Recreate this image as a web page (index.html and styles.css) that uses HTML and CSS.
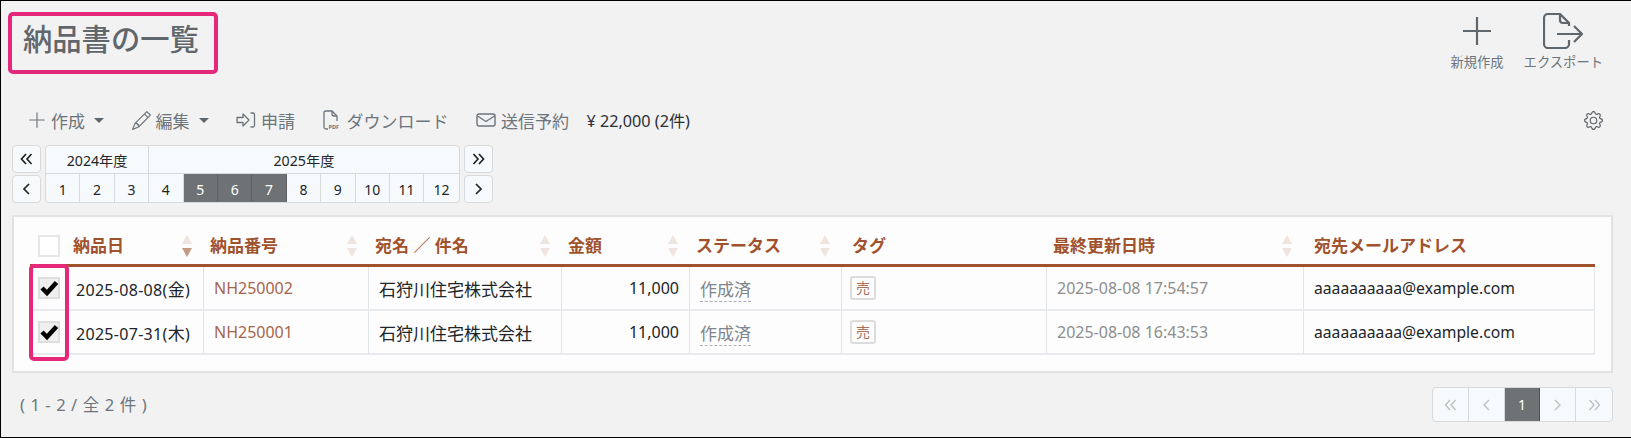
FILE: index.html
```html
<!DOCTYPE html>
<html lang="ja">

<head>
    <meta charset="UTF-8">
    <title>納品書の一覧</title>
    <link rel="stylesheet" href="styles.css">
</head>

<body>
    <div class="page">
        <header class="top">
            <h1 class="title">納品書の一覧</h1>
            <div class="top-actions">
                <div class="top-action new">
                    <svg class="top-icon" width="30" height="30" viewBox="0 0 30 30"><path d="M15 1v28M1 15h28" fill="none" stroke="currentColor" stroke-width="2.2"/></svg>
                    <span>新規作成</span>
                </div>
                <div class="top-action export">
                    <svg class="top-icon" width="40" height="36" viewBox="0 0 40 36"><path d="M26 13V10L17 1H5a4 4 0 0 0-4 4v26a4 4 0 0 0 4 4h17a4 4 0 0 0 4-4v-4M17 1v6a3 3 0 0 0 3 3h6M14 21h25M31 13l8 8-8 8" fill="none" stroke="currentColor" stroke-width="2.2"/></svg>
                    <span>エクスポート</span>
                </div>
            </div>
        </header>

        <div class="toolbar">
            <span class="tool"><svg width="18" height="18" viewBox="0 0 16 16" fill="currentColor"><path d="M8 1a.5.5 0 0 1 .5.5v6h6a.5.5 0 0 1 0 1h-6v6a.5.5 0 0 1-1 0v-6h-6a.5.5 0 0 1 0-1h6v-6A.5.5 0 0 1 8 1"/></svg>作成<i class="caret"></i></span>
            <span class="tool"><svg width="19" height="19" viewBox="0 0 16 16" fill="currentColor"><path d="M12.146.146a.5.5 0 0 1 .708 0l3 3a.5.5 0 0 1 0 .708l-10 10a.5.5 0 0 1-.168.11l-5 2a.5.5 0 0 1-.65-.65l2-5a.5.5 0 0 1 .11-.168zM11.207 2.5 13.5 4.793 14.793 3.5 12.5 1.207zm1.586 3L10.5 3.207 4 9.707V10h.5a.5.5 0 0 1 .5.5v.5h.5a.5.5 0 0 1 .5.5v.5h.293zm-9.761 5.175-.106.106-1.528 3.821 3.821-1.528.106-.106A.5.5 0 0 1 5 12.5V12h-.5a.5.5 0 0 1-.5-.5V11h-.5a.5.5 0 0 1-.468-.325"/></svg>編集<i class="caret"></i></span>
            <span class="tool"><svg width="20" height="18" viewBox="0 0 20 18" fill="none" stroke="currentColor" stroke-width="1.3" stroke-linejoin="round"><path d="M1 6.500h6V3l6 6-6 6v-3.500H1zM14.500 2H17a1.500 1.500 0 0 1 1.500 1.500v11A1.500 1.500 0 0 1 17 16h-2.500"/></svg>申請</span>
            <span class="tool"><svg width="19" height="20" viewBox="0 0 19 20" fill="none" stroke="currentColor" stroke-width="1.3"><path d="M5 19H3a2 2 0 0 1-2-2V3a2 2 0 0 1 2-2h6l5 5v5M9 1v3a2 2 0 0 0 2 2h3"/><text class="pdf-mark" x="5.500" y="19">PDF</text></svg>ダウンロード</span>
            <span class="tool"><svg width="20" height="14" viewBox="0 0 20 14" fill="none" stroke="currentColor" stroke-width="1.4" stroke-linejoin="round"><rect x="1" y="1" width="18" height="12" rx="2"/><path d="M1.500 3l8.500 5.500L18.500 3"/></svg>送信予約</span>
            <span class="total">¥ 22,000 (2件)</span>
            <svg class="gear" width="19" height="19" viewBox="0 0 16 16" fill="currentColor"><path d="M8 4.754a3.246 3.246 0 1 0 0 6.492 3.246 3.246 0 0 0 0-6.492M5.754 8a2.246 2.246 0 1 1 4.492 0 2.246 2.246 0 0 1-4.492 0"/><path d="M9.796 1.343c-.527-1.79-3.065-1.79-3.592 0l-.094.319a.873.873 0 0 1-1.255.52l-.292-.16c-1.64-.892-3.433.902-2.54 2.541l.159.292a.873.873 0 0 1-.52 1.255l-.319.094c-1.79.527-1.79 3.065 0 3.592l.319.094a.873.873 0 0 1 .52 1.255l-.16.292c-.892 1.64.901 3.434 2.541 2.54l.292-.159a.873.873 0 0 1 1.255.52l.094.319c.527 1.79 3.065 1.79 3.592 0l.094-.319a.873.873 0 0 1 1.255-.52l.292.16c1.64.893 3.434-.902 2.54-2.541l-.159-.292a.873.873 0 0 1 .52-1.255l.319-.094c1.79-.527 1.79-3.065 0-3.592l-.319-.094a.873.873 0 0 1-.52-1.255l.16-.292c.893-1.64-.902-3.433-2.541-2.54l-.292.159a.873.873 0 0 1-1.255-.52zm-2.633.283c.246-.835 1.428-.835 1.674 0l.094.319a1.873 1.873 0 0 0 2.693 1.115l.291-.16c.764-.415 1.6.42 1.184 1.185l-.159.292a1.873 1.873 0 0 0 1.116 2.692l.318.094c.835.246.835 1.428 0 1.674l-.319.094a1.873 1.873 0 0 0-1.115 2.693l.16.291c.415.764-.42 1.6-1.185 1.184l-.291-.159a1.873 1.873 0 0 0-2.693 1.116l-.094.318c-.246.835-1.428.835-1.674 0l-.094-.319a1.873 1.873 0 0 0-2.692-1.115l-.292.16c-.764.415-1.6-.42-1.184-1.185l.159-.291A1.873 1.873 0 0 0 1.945 8.93l-.319-.094c-.835-.246-.835-1.428 0-1.674l.319-.094A1.873 1.873 0 0 0 3.06 4.377l-.16-.292c-.415-.764.42-1.6 1.185-1.184l.292.159a1.873 1.873 0 0 0 2.692-1.115z"/></svg>
        </div>

        <div class="calendar">
            <div class="cal-nav">
                <span class="cal-btn"><svg width="13" height="12" viewBox="0 0 13 12"><path d="M6 1L1.500 6 6 11M11.500 1L7 6l4.500 5"/></svg></span>
                <span class="cal-btn"><svg width="13" height="12" viewBox="0 0 13 12"><path d="M9 1L4 6l5 5"/></svg></span>
            </div>
            <div class="cal-grid">
                <div class="cal-year y2024">2024年度</div>
                <div class="cal-year y2025">2025年度</div>
                <div class="cal-month">1</div>
                <div class="cal-month">2</div>
                <div class="cal-month">3</div>
                <div class="cal-month">4</div>
                <div class="cal-month active">5</div>
                <div class="cal-month active">6</div>
                <div class="cal-month active">7</div>
                <div class="cal-month">8</div>
                <div class="cal-month">9</div>
                <div class="cal-month">10</div>
                <div class="cal-month">11</div>
                <div class="cal-month">12</div>
            </div>
            <div class="cal-nav">
                <span class="cal-btn"><svg width="13" height="12" viewBox="0 0 13 12"><path d="M1.500 1L6 6l-4.500 5M7 1l4.500 5L7 11"/></svg></span>
                <span class="cal-btn"><svg width="13" height="12" viewBox="0 0 13 12"><path d="M4 1l5 5-5 5"/></svg></span>
            </div>
        </div>

        <section class="panel">
            <table class="list">
                <colgroup>
                    <col class="c-check">
                    <col class="c-date">
                    <col class="c-no">
                    <col class="c-name">
                    <col class="c-amount">
                    <col class="c-status">
                    <col class="c-tag">
                    <col class="c-updated">
                    <col class="c-mail">
                </colgroup>
                <thead>
                    <tr>
                        <th><span class="check"></span></th>
                        <th class="th-date"><div class="th-in">納品日<span class="sort desc"></span></div></th>
                        <th><div class="th-in">納品番号<span class="sort"></span></div></th>
                        <th><div class="th-in">宛名 ／ 件名<span class="sort"></span></div></th>
                        <th><div class="th-in">金額<span class="sort"></span></div></th>
                        <th><div class="th-in">ステータス<span class="sort"></span></div></th>
                        <th class="th-tag"><div class="th-in">タグ</div></th>
                        <th><div class="th-in">最終更新日時<span class="sort"></span></div></th>
                        <th class="th-mail"><div class="th-in">宛先メールアドレス</div></th>
                    </tr>
                </thead>
                <tbody>
                    <tr>
                        <td class="td-check"><span class="check on"><svg width="22" height="22" viewBox="0 0 22 22"><path d="M4 11l5 5L18.500 5.500" fill="none" stroke="#000" stroke-width="4.500"/></svg></span></td>
                        <td class="td-date">2025-08-08(<span class="ja">金</span>)</td>
                        <td><a class="link">NH250002</a></td>
                        <td class="ja">石狩川住宅株式会社</td>
                        <td class="num">11,000</td>
                        <td class="ja"><span class="status">作成済</span></td>
                        <td class="td-tag"><span class="tag">売</span></td>
                        <td class="updated">2025-08-08 17:54:57</td>
                        <td class="td-mail">aaaaaaaaaa@example.com</td>
                    </tr>
                    <tr>
                        <td class="td-check"><span class="check on"><svg width="22" height="22" viewBox="0 0 22 22"><path d="M4 11l5 5L18.500 5.500" fill="none" stroke="#000" stroke-width="4.500"/></svg></span></td>
                        <td class="td-date">2025-07-31(<span class="ja">木</span>)</td>
                        <td><a class="link">NH250001</a></td>
                        <td class="ja">石狩川住宅株式会社</td>
                        <td class="num">11,000</td>
                        <td class="ja"><span class="status">作成済</span></td>
                        <td class="td-tag"><span class="tag">売</span></td>
                        <td class="updated">2025-08-08 16:43:53</td>
                        <td class="td-mail">aaaaaaaaaa@example.com</td>
                    </tr>
                </tbody>
            </table>
        </section>

        <footer class="foot">
            <span class="count">( 1 - 2 / 全 2 件 )</span>
            <div class="pager">
                <span class="page-item"><svg width="13" height="12" viewBox="0 0 13 12"><path d="M6 1L1.500 6 6 11M11.500 1L7 6l4.500 5"/></svg></span>
                <span class="page-item"><svg width="13" height="12" viewBox="0 0 13 12"><path d="M9 1L4 6l5 5"/></svg></span>
                <span class="page-item active">1</span>
                <span class="page-item"><svg width="13" height="12" viewBox="0 0 13 12"><path d="M4 1l5 5-5 5"/></svg></span>
                <span class="page-item"><svg width="13" height="12" viewBox="0 0 13 12"><path d="M1.500 1L6 6l-4.500 5M7 1l4.500 5L7 11"/></svg></span>
            </div>
        </footer>

        <!-- annotations drawn over the screen -->
        <div class="mark mark-title"></div>
        <div class="mark mark-checks"></div>
    </div>
</body>

</html>
```

FILE: styles.css
```css
* {
    box-sizing: border-box;
}

body {
    margin: 0;
    font-family: "Noto Sans", "Noto Sans CJK JP", sans-serif;
    font-size: 16px;
    color: #2b3035;
    background-color: #f2f2f2;
}

.page {
    position: relative;
    height: 438px;
    overflow: hidden;
    border: 1px solid #000;
    border-right: none;
    background-color: #f2f2f2;
}

/* header */
.top {
    display: flex;
    justify-content: space-between;
    height: 105px;
}

.title {
    margin: 20px 0 0 22px;
    font-size: 29.3px;
    line-height: 36px;
    font-weight: 500;
    color: #5f666c;
}

.top-actions {
    display: flex;
    align-items: flex-start;
    gap: 20px;
    padding: 12px 28px 0 0;
}

.top-action {
    display: flex;
    flex-direction: column;
    align-items: center;
    font-size: 13.3px;
    color: #6c757d;
}

.top-icon {
    color: #5f666c;
    height: 36px;
    margin-bottom: 3px;
}

/* toolbar */
.toolbar {
    display: flex;
    align-items: center;
    height: 28px;
    padding-left: 27px;
    font-size: 17px;
    color: #6c757d;
}

.tool {
    display: flex;
    align-items: center;
    gap: 5px;
    margin-right: 27.5px;
}

.caret {
    width: 0;
    height: 0;
    margin-left: 4px;
    border-left: 5px solid transparent;
    border-right: 5px solid transparent;
    border-top: 5px solid #5f666c;
}

.pdf-mark {
    font-size: 5.5px;
    font-weight: 700;
    stroke: none;
    fill: currentColor;
}

.total {
    margin-left: -10px;
    font-size: 16.2px;
    color: #2b3035;
}

.gear {
    margin-left: auto;
    margin-right: 28px;
    color: #5f666c;
}

/* calendar */
.calendar {
    display: flex;
    gap: 4px;
    height: 58px;
    margin: 11px 0 0 11px;
    font-size: 14.2px;
}

.cal-nav {
    display: flex;
    flex-direction: column;
    gap: 2px;
    width: 29px;
}

.cal-btn {
    display: flex;
    flex: 1;
    align-items: center;
    justify-content: center;
    background-color: #f7fafc;
    border: 1px solid #d9d9d9;
    border-radius: 4px;
}

.cal-btn svg {
    fill: none;
    stroke: #212529;
    stroke-width: 1.7;
}

.cal-grid {
    display: grid;
    grid-template-columns: repeat(12, 34.4px);
    grid-template-rows: 28px 30px;
    overflow: hidden;
    background-color: #f7fafc;
    border: 1px solid #d9d9d9;
    border-radius: 4px;
}

.cal-year,
.cal-month {
    display: flex;
    align-items: center;
    justify-content: center;
    color: #212529;
}

.cal-year {
    border-bottom: 1px solid #d9d9d9;
}

.y2024 {
    grid-column: span 3;
    border-right: 1px solid #d9d9d9;
}

.y2025 {
    grid-column: span 9;
}

.cal-month {
    font-size: 14px;
    border-right: 1px solid #d9d9d9;
}

.cal-month:last-child {
    border-right: none;
}

.cal-month.active {
    color: #fff;
    background-color: #6e7275;
    border-right-color: #5f6366;
}

/* list */
.panel {
    height: 158px;
    width: 1601px;
    margin: 12px 0 0 11px;
    padding: 15px 16px 0;
    background-color: #fdfdfd;
    border: 2px solid #e2e2e2;
}

.list {
    width: 1565px;
    table-layout: fixed;
    border-collapse: separate;
    border-spacing: 0;
    font-size: 16px;
}

.c-check { width: 39px; }
.c-date { width: 135px; }
.c-no { width: 165px; }
.c-name { width: 193px; }
.c-amount { width: 128px; }
.c-status { width: 152px; }
.c-tag { width: 205px; }
.c-updated { width: 257px; }
.c-mail { width: 291px; }

.list th {
    height: 35px;
    padding: 0 8px 7px 6px;
    text-align: left;
    font-size: 17px;
    font-weight: 700;
    color: #a0522d;
    border-bottom: 3px solid #a0522d;
}

.list th:first-child {
    padding: 0 0 4px 8px;
}

.list th.th-date {
    padding-left: 4px;
}

.list th.th-tag {
    padding-left: 10px;
}

.list th.th-mail {
    padding-left: 10px;
}

.th-in {
    display: flex;
    align-items: center;
    justify-content: space-between;
    padding-right: 4px;
}

.sort {
    position: relative;
    width: 10px;
    height: 22px;
    margin-top: 2px;
}

.sort::before,
.sort::after {
    content: "";
    position: absolute;
    left: 0;
    border-left: 5px solid transparent;
    border-right: 5px solid transparent;
}

.sort::before {
    top: 0;
    border-bottom: 9px solid #f0e4df;
}

.sort::after {
    bottom: 0;
    border-top: 9px solid #f0e4df;
}

.sort.desc::after {
    border-top-color: #c49a82;
}

.check {
    display: block;
    width: 22px;
    height: 22px;
    background-color: #fff;
    border: 2px solid #e6e6e6;
}

.check.on {
    background-color: #efefef;
    border-color: #dedede;
}

.check svg {
    display: block;
    margin: -2px;
}

.list td {
    height: 44px;
    padding: 0 10px;
    white-space: nowrap;
    color: #212529;
    border-right: 1px solid #dfe5e9;
    border-bottom: 2px solid #e8eaee;
}

.ja {
    font-size: 17px;
}

.list td.td-check {
    padding: 0 0 0 8px;
    border-right: none;
}

.list td.td-date {
    padding-left: 7px;
    letter-spacing: 0.3px;
}

.list td.td-tag {
    padding-left: 8px;
}

.list td.td-mail {
    font-size: 15.7px;
}

.list td.num {
    text-align: right;
}

.link {
    color: #a5654a;
}

.status {
    color: #7d858b;
    border-bottom: 1px dashed #aab0b5;
}

.tag {
    display: inline-block;
    width: 26px;
    height: 24px;
    font-size: 14px;
    line-height: 20px;
    text-align: center;
    color: #a9705a;
    border: 2px solid #dcdcdc;
    border-radius: 3px;
}

.list td.updated {
    color: #8d8d8d;
}

/* footer */
.foot {
    display: flex;
    align-items: flex-start;
    justify-content: space-between;
    width: 1612px;
    margin-top: 14px;
    padding-left: 19px;
}

.count {
    margin-top: 5px;
    font-size: 16.5px;
    letter-spacing: 0.6px;
    color: #6c757d;
}

.pager {
    display: flex;
    height: 35px;
    overflow: hidden;
    background-color: #f7fafc;
    border: 1px solid #d9d9d9;
    border-radius: 4px;
}

.page-item {
    display: flex;
    align-items: center;
    justify-content: center;
    width: 35.8px;
    border-right: 1px solid #d9d9d9;
}

.page-item svg {
    fill: none;
    stroke: #b9bec3;
    stroke-width: 1.3;
}

.page-item:last-child {
    border-right: none;
}

.page-item.active {
    font-size: 14px;
    color: #fff;
    background-color: #6e7275;
    border-right-color: #495057;
}

/* pink annotation boxes */
.mark {
    position: absolute;
    border: 4px solid #e6287a;
    border-radius: 5px;
}

.mark-title {
    top: 11px;
    left: 7px;
    width: 210px;
    height: 62px;
}

.mark-checks {
    top: 263px;
    left: 28px;
    width: 40px;
    height: 97px;
}
```
